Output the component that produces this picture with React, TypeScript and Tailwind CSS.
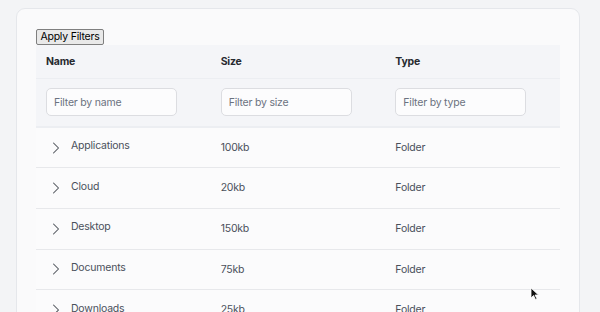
import { ChevronRight } from 'lucide-react'

const rows = [
  { name: 'Applications', size: '100kb', type: 'Folder' },
  { name: 'Cloud', size: '20kb', type: 'Folder' },
  { name: 'Desktop', size: '150kb', type: 'Folder' },
  { name: 'Documents', size: '75kb', type: 'Folder' },
  { name: 'Downloads', size: '25kb', type: 'Folder' },
]

const filters = ['Filter by name', 'Filter by size', 'Filter by type']

export default function App() {
  return (
    <div className="relative h-[312px] w-[600px] overflow-hidden bg-[#f3f4f6] px-4 pt-2 font-['Inter',sans-serif] text-[#4a505b]">
      <div className="w-[564px] rounded-[9px] border border-[#e5e7eb] bg-[#fafafb] px-[19px] pt-5 pb-10">
        <button className="block h-[16px] w-[68px] rounded-[2px] border border-[#7f7f7f] bg-[#e9e9e9] text-[10.5px] leading-[14px] tracking-[-0.02em] text-black">
          Apply Filters
        </button>
        <table className="w-[524px] table-fixed border-collapse text-left text-[10.5px] tracking-[-0.02em]">
          <thead>
            <tr className="h-[33px] border-b border-[#eceef2] bg-[#f4f5f8]">
              <th className="px-[10px] pt-[1px] font-bold text-[#272a30]">Name</th>
              <th className="px-[10px] pt-[1px] font-bold text-[#272a30]">Size</th>
              <th className="px-[10px] pt-[1px] font-bold text-[#272a30]">Type</th>
            </tr>
            <tr className="h-[49px] border-b-2 border-[#eceef2] bg-[#f4f5f8]">
              {filters.map((f) => (
                <th key={f} className="px-[10px] font-normal">
                  <input
                    placeholder={f}
                    className="h-[28px] w-[131px] rounded-[5px] border border-[#dcdde1] bg-[#fcfcfd] px-[7px] text-[10.5px] tracking-[-0.02em] outline-none placeholder:text-[#6b7280]"
                  />
                </th>
              ))}
            </tr>
          </thead>
          <tbody>
            {rows.map((r) => (
              <tr key={r.name} className="h-[40.7px] border-b border-[#e7e8eb] bg-[#fbfbfc]">
                <td className="px-[10px]">
                  <div className="flex items-center gap-[5px]">
                    <ChevronRight size={20} strokeWidth={1.25} className="shrink-0 text-[#4b5058]" />
                    <span className="-mt-[3px]">{r.name}</span>
                  </div>
                </td>
                <td className="px-[10px]">{r.size}</td>
                <td className="px-[10px]">{r.type}</td>
              </tr>
            ))}
          </tbody>
        </table>
      </div>
      <svg className="absolute left-[530px] top-[287px]" width="10" height="14" viewBox="0 0 10 14">
        <path d="M1 1 L1 11 L3.5 8.5 L5.5 12.5 L7 11.8 L5 8 L8.5 8 Z" fill="#111" stroke="#fff" strokeWidth="0.8" />
      </svg>
    </div>
  )
}
